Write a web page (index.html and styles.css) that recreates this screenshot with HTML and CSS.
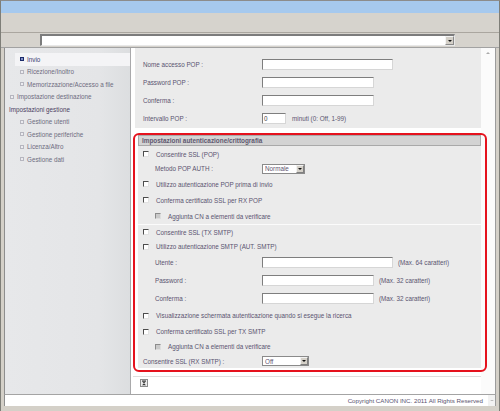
FILE: index.html
```html
<!DOCTYPE html>
<html>
<head>
<meta charset="utf-8">
<link rel="stylesheet" href="styles.css">
</head>
<body>
<div class="window">
  <div class="titlebar"></div>
  <div class="toolbar"></div>
  <div class="address">
    <div class="addr-field"><span class="addr-btn"><span class="tri"></span></span></div>
  </div>
  <div class="frame">
    <div class="side">
      <div class="item sub sel"><span class="ico ico-sel"></span><span class="t-sel">Invio</span></div>
      <div class="item sub"><span class="ico"></span>Ricezione/Inoltro</div>
      <div class="item sub"><span class="ico"></span>Memorizzazione/Accesso a file</div>
      <div class="item top"><span class="ico"></span>Impostazione destinazione</div>
      <div class="item head">Impostazioni gestione</div>
      <div class="item sub"><span class="ico"></span>Gestione utenti</div>
      <div class="item sub"><span class="ico"></span>Gestione periferiche</div>
      <div class="item sub"><span class="ico"></span>Licenza/Altro</div>
      <div class="item sub"><span class="ico"></span>Gestione dati</div>
    </div>
    <div class="main">
      <div class="content">
        <div class="upper">
          <div class="row r18"><span class="lab">Nome accesso POP :</span><span class="field w131"></span></div>
          <div class="row r18"><span class="lab">Password POP :</span><span class="field w112"></span></div>
          <div class="row r18"><span class="lab">Conferma :</span><span class="field w112"></span></div>
          <div class="row r18"><span class="lab">Intervallo POP :</span><span class="field w24"><span class="val">0</span></span><span class="note n6">minuti (0: Off, 1-99)</span></div>
        </div>
        <div class="section">
          <div class="sec-head">Impostazioni autenticazione/crittografia</div>
          <div class="sec-body">
            <div class="group">
              <div class="row h14"><span class="cb"></span>Consentire SSL (POP)</div>
              <div class="row h15 ind"><span class="lab lab-ind">Metodo POP AUTH :</span><span class="select w43"><span class="sel-txt">Normale</span><span class="sel-btn"><span class="tri"></span></span></span></div>
              <div class="row h16"><span class="cb"></span>Utilizzo autenticazione POP prima di invio</div>
              <div class="row h16"><span class="cb"></span>Conferma certificato SSL per RX POP</div>
              <div class="row h16 ind"><span class="cb dis"></span>Aggiunta CN a elementi da verificare</div>
            </div>
            <div class="group sep">
              <div class="row h14"><span class="cb"></span>Consentire SSL (TX SMTP)</div>
              <div class="row h15"><span class="cb"></span>Utilizzo autenticazione SMTP (AUT. SMTP)</div>
              <div class="row h17 ind"><span class="lab lab-ind">Utente :</span><span class="field w131"></span><span class="note">(Max. 64 caratteri)</span></div>
              <div class="row h18 ind"><span class="lab lab-ind">Password :</span><span class="field w112"></span><span class="note">(Max. 32 caratteri)</span></div>
              <div class="row h18 ind"><span class="lab lab-ind">Conferma :</span><span class="field w112"></span><span class="note">(Max. 32 caratteri)</span></div>
              <div class="row h17"><span class="cb"></span>Visualizzazione schermata autenticazione quando si esegue la ricerca</div>
              <div class="row h15"><span class="cb"></span>Conferma certificato SSL per TX SMTP</div>
              <div class="row h15 ind"><span class="cb dis"></span>Aggiunta CN a elementi da verificare</div>
              <div class="row h14"><span class="lab">Consentire SSL (RX SMTP) :</span><span class="select w47"><span class="sel-txt">Off</span><span class="sel-btn"><span class="tri"></span></span></span></div>
            </div>
          </div>
        </div>
        <div class="bottom">
          <svg class="topicon" width="8" height="8" viewBox="0 0 8 8">
            <rect x="0.5" y="0.5" width="7" height="7" fill="#ececec" stroke="#8c8c8c"/>
            <line x1="2" y1="2" x2="6" y2="2" stroke="#333" stroke-width="1"/>
            <path d="M2 2.5 L6 2.5 L4 4.2 Z" fill="#333"/>
            <path d="M2 6.3 L6 6.3 L4 4.2 Z" fill="#333"/>
          </svg>
        </div>
      </div>
      <div class="scroll"><span class="up"></span></div>
    </div>
  </div>
  <div class="footer">
    <span class="copy">Copyright CANON INC. 2011 All Rights Reserved</span>
    <span class="fscroll"><span class="dn"></span></span>
  </div>
</div>
<div class="redbox"></div>
</body>
</html>
```
FILE: styles.css
```css
html, body {
  margin: 0;
  padding: 0;
}
body {
  width: 500px;
  height: 411px;
  overflow: hidden;
  position: relative;
  background: #d4d0c8;
  font-family: "Liberation Sans", Arial, sans-serif;
  font-size: 6.3px;
  color: #5a5470;
}
.window {
  box-sizing: border-box;
  height: 411px;
  border-top: 1px solid #8c8c8c;
  border-left: 1px solid #7e7e78;
  border-right: 1px solid #7e7e78;
  display: flex;
  flex-direction: column;
}
.titlebar {
  height: 12px;
  background: #a6c9ee;
}
.toolbar {
  height: 19px;
  background: #d6d3cd;
  border-bottom: 1px solid #aaa69f;
}
.address {
  height: 14px;
  background: #d6d3cd;
  border-bottom: 1px solid #a2a2a2;
  padding-left: 39px;
  box-sizing: content-box;
}
.addr-field {
  box-sizing: border-box;
  margin-top: 1px;
  width: 415px;
  height: 12px;
  background: #fff;
  border-top: 2px solid #7c7c7c;
  border-left: 2px solid #7c7c7c;
  border-right: 1px solid #e8e8e8;
  border-bottom: 1px solid #e8e8e8;
  display: flex;
  justify-content: flex-end;
  align-items: center;
}
.addr-btn {
  box-sizing: border-box;
  width: 9px;
  height: 9px;
  background: #d4d0c8;
  border: 1px solid #8a8a8a;
  border-top-color: #f4f4f4;
  border-left-color: #f4f4f4;
  display: flex;
  align-items: center;
  justify-content: center;
}
.tri {
  width: 0;
  height: 0;
  border-left: 2px solid transparent;
  border-right: 2px solid transparent;
  border-top: 2px solid #111;
}
.frame {
  height: 346px;
  margin: 0 3px;
  border-left: 1px solid #8e8e8e;
  border-right: 1px solid #9c9c9c;
  border-bottom: 1px solid #a4a4a4;
  display: flex;
  background: #fff;
}
.side {
  box-sizing: border-box;
  width: 126px;
  border-right: 1px solid #a9a9ab;
  background: linear-gradient(to right, #e7e8ea 0%, #e4e5e7 76%, #dcdee0 100%);
  padding-top: 5px;
  color: #6e6c80;
}
.item {
  height: 12.5px;
  display: flex;
  align-items: center;
  white-space: nowrap;
}
.item.sub {
  margin-left: 10px;
  padding-left: 5px;
}
.item.top {
  padding-left: 5px;
}
.item.head {
  padding-left: 4px;
  color: #4b3e62;
}
.item.sel {
  background: #f4f4f6;
}
.t-sel {
  color: #3c3c72;
}
.ico {
  box-sizing: border-box;
  width: 4px;
  height: 4px;
  border: 1px solid #b6b6bf;
  background: #ececf0;
  margin-right: 3px;
  flex: none;
}
.ico-sel {
  border-color: #1c2b6a;
  background: #8090c8;
}
.main {
  flex: 1;
  display: flex;
}
.content {
  width: 350px;
  background: #fff;
  overflow: hidden;
}
.scroll {
  flex: 1;
  background: #fbfbfb;
  display: flex;
  justify-content: center;
  padding-top: 4px;
  box-sizing: border-box;
}
.up {
  width: 0;
  height: 0;
  border-left: 2px solid transparent;
  border-right: 2px solid transparent;
  border-bottom: 2px solid #aaa;
}
.upper {
  margin-left: 4px;
  background: #ebebeb;
  padding-top: 7px;
  padding-bottom: 1px;
}
.row {
  display: flex;
  align-items: center;
  padding-left: 8px;
  white-space: nowrap;
}
.r18 { height: 18px; }
.h14 { height: 14px; }
.h15 { height: 15px; }
.h16 { height: 16px; }
.h17 { height: 17px; }
.h18 { height: 18px; }
.lab {
  width: 119px;
  flex: none;
}
.lab-ind {
  width: 107px;
}
.field {
  box-sizing: border-box;
  height: 11px;
  background: #fff;
  border: 1px solid #d6d6d6;
  border-top-color: #7e7e7e;
  border-left-color: #7e7e7e;
  display: flex;
  align-items: center;
  flex: none;
}
.w131 { width: 131px; }
.w112 { width: 112px; }
.w24 { width: 24px; }
.w43 { width: 43px; }
.w47 { width: 47px; }
.val {
  padding-left: 1px;
  color: #444;
}
.note {
  margin-left: 5px;
}
.n6 {
  margin-left: 6px;
}
.section {
  margin-top: 7px;
  margin-left: 7px;
}
.sec-head {
  box-sizing: border-box;
  height: 11px;
  background: #d3d3d3;
  border: 1px solid #a9a9a9;
  padding-left: 3px;
  display: flex;
  align-items: center;
  font-weight: bold;
  font-size: 6.4px;
  color: #5e5870;
}
.sec-body {
  background: #ebebeb;
  padding-top: 1px;
}
.sec-body .row {
  padding-left: 5px;
}
.sec-body .row.ind {
  padding-left: 17px;
}
.sep {
  border-top: 1px solid #fbfbfb;
}
.cb {
  box-sizing: border-box;
  width: 6px;
  height: 6px;
  background: #fff;
  border: 1px solid #e2e2e2;
  border-top-color: #4c4c4c;
  border-left-color: #4c4c4c;
  margin-right: 7px;
  flex: none;
}
.cb.dis {
  background: #cacaca;
  border-top-color: #8c8c8c;
  border-left-color: #8c8c8c;
  border-right-color: #dedede;
  border-bottom-color: #dedede;
}
.select {
  box-sizing: border-box;
  height: 10px;
  background: #fff;
  border: 1px solid #8a8a8a;
  display: flex;
  align-items: center;
  flex: none;
}
.sel-txt {
  flex: 1;
  padding-left: 2px;
  color: #5e5470;
}
.sel-btn {
  box-sizing: border-box;
  width: 8px;
  height: 8px;
  background: #d4d0c8;
  border: 1px solid #808080;
  border-top-color: #f2f2f2;
  border-left-color: #f2f2f2;
  display: flex;
  align-items: center;
  justify-content: center;
}
.bottom {
  margin-top: 8px;
  border-top: 1px solid #dedede;
  margin-left: 2px;
  padding-top: 2px;
  padding-left: 7px;
}
.topicon {
  display: block;
}
.footer {
  height: 11px;
  margin: 0 3px;
  border-left: 1px solid #8e8e8e;
  border-right: 1px solid #9c9c9c;
  background: #fff;
  display: flex;
  align-items: center;
}
.copy {
  flex: 1;
  text-align: right;
  padding-right: 5px;
  font-size: 6.2px;
}
.fscroll {
  width: 7px;
  height: 11px;
  background: #f2f2f2;
  display: flex;
  align-items: center;
  justify-content: center;
}
.dn {
  width: 0;
  height: 0;
  border-left: 2px solid transparent;
  border-right: 2px solid transparent;
  border-top: 1px solid #aaa;
}
.redbox {
  position: absolute;
  left: 133px;
  top: 133px;
  width: 354px;
  height: 239px;
  box-sizing: border-box;
  border: 2px solid #e5121d;
  border-radius: 6px;
}
```
